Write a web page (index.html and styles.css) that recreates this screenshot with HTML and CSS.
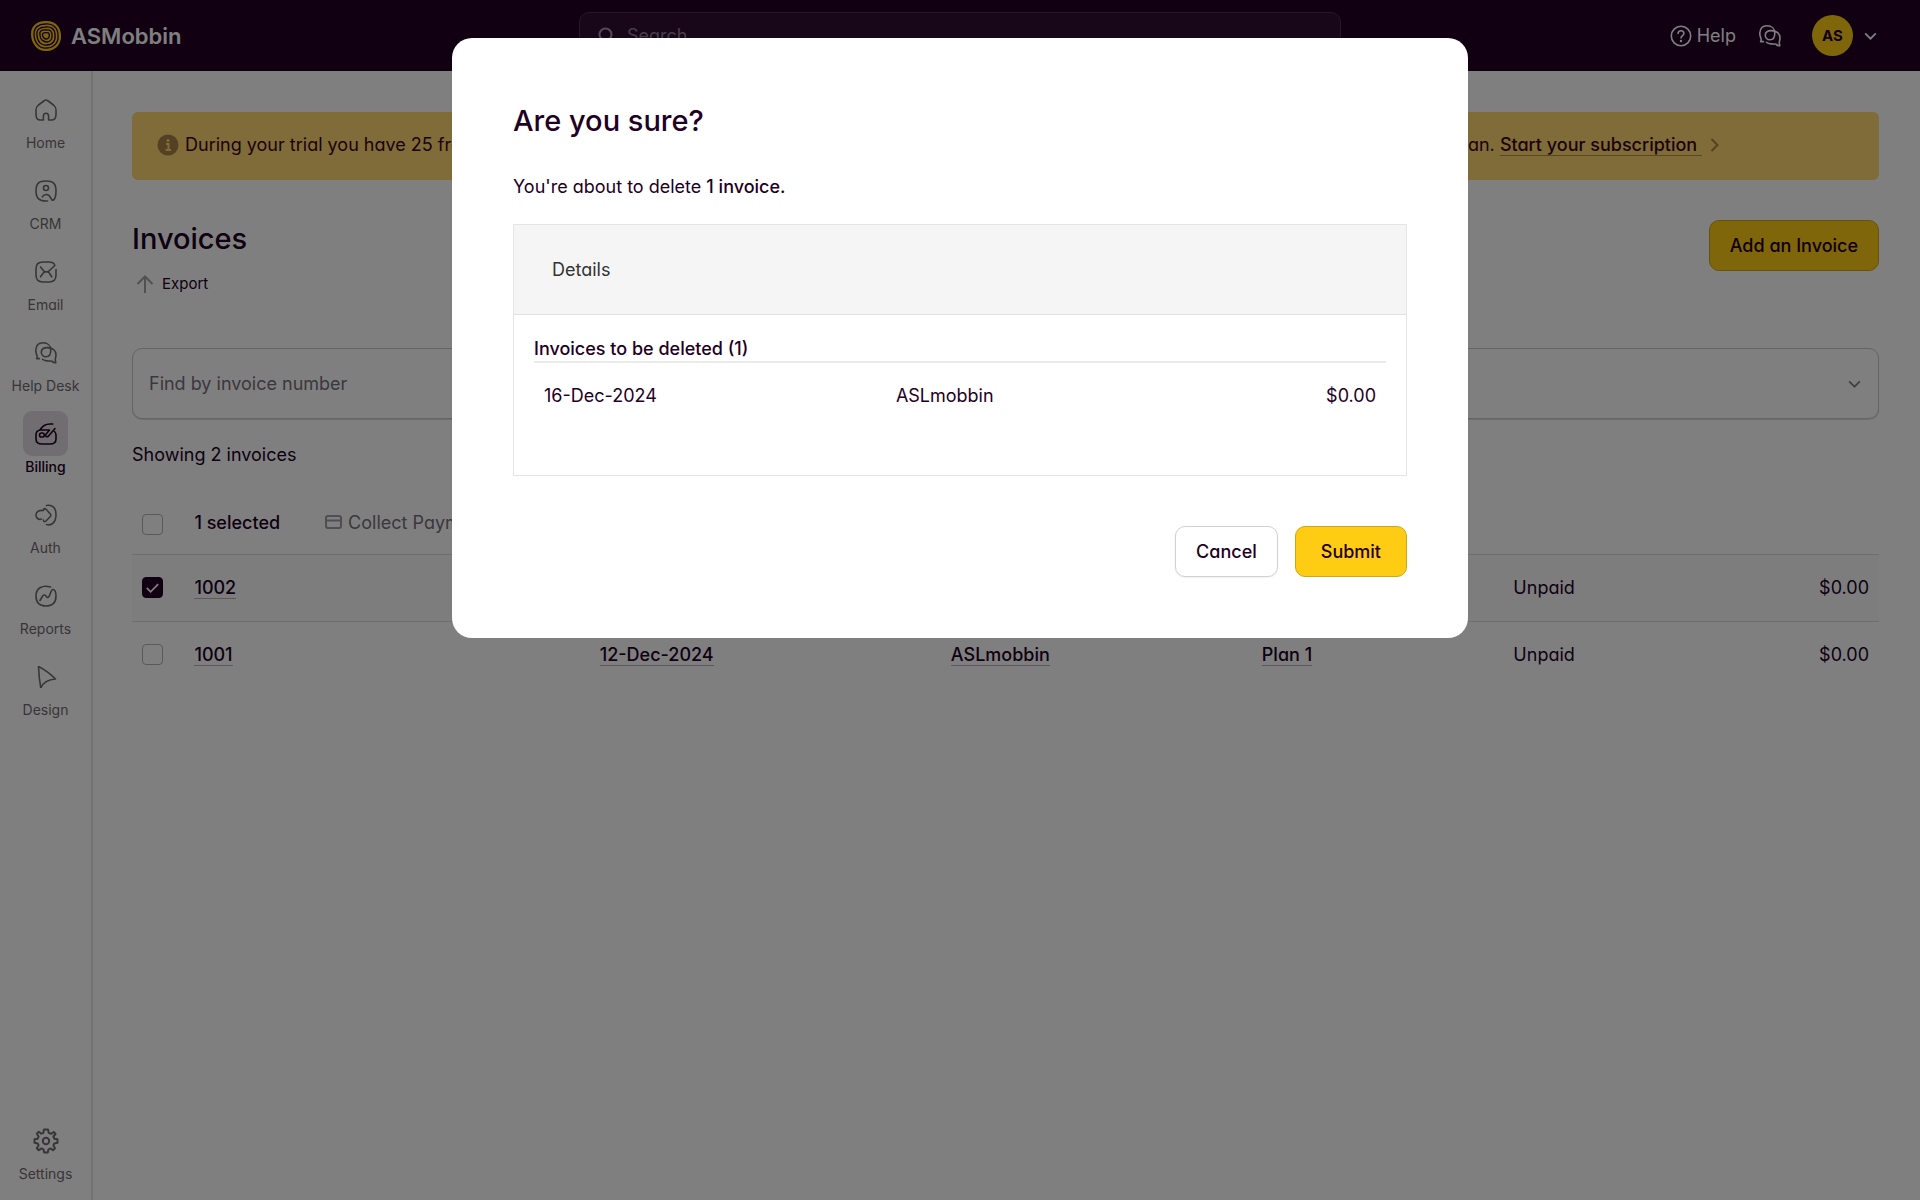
FILE: index.html
```html
<!DOCTYPE html>
<html lang="en">
<head>
<meta charset="utf-8">
<meta name="viewport" content="width=device-width, initial-scale=1">
<title>Invoices – ASMobbin</title>
<link rel="stylesheet" href="styles.css">
</head>
<body>
<svg class="sprite" aria-hidden="true">
  <symbol id="chat" viewBox="0 0 22 22"><path d="M4.5 16.6H1.6C2.6 15.4 2.3 14.4 1.8 13C.9 10.600.7 9.500.8 8C1.100 3.600 3.700.8 8 .8C12.500.8 15.800 3.600 15.800 8C15.800 12.200 13.800 14.800 11 14.800C8.200 14.800 6.300 12.800 6.300 10.300C6.300 7.400 8.500 5.600 12.200 5.600C17.600 5.600 21 8.500 21 13C21 15 20.300 16 20.300 17.500C20.300 18.800 20.500 19.700 20.800 20.700C19.500 21 18 20.500 17.200 19.300C15.500 18.800 13.800 19.200 12 18.900C10 18.700 8.800 18.300 7.600 17.400"/></symbol>
  <symbol id="chevron" viewBox="0 0 14 9"><path d="M1 1.500L7 7.500L13 1.500"/></symbol>
</svg>

<div class="app">
  <header class="topbar">
    <a class="brand" href="#">
      <svg class="brand-mark" viewBox="0 0 32 32" aria-hidden="true">
        <path class="mark-fill" d="M1 14C1 5 8 1 15 1C24 0 31 6 31 15C32 24 25 31 17 31C8 32 1 24 1 14z"/>
        <path class="mark-ring" d="M4 14C4 7 9 4 15 4C23 3 28 8 28 15C29 22 24 28 17 28C9 29 4 22 4 14z"/>
        <path class="mark-ring" d="M7 15C6 9 11 7 15 7C21 6 25 9 25 15C26 21 22 25 17 25C11 26 7 21 7 15z"/>
        <path class="mark-ring" d="M10 15C9 11 12 9.500 16 10C20 9.500 22.500 11 22 16C22.500 19 20 22 17 22C13 22 10 19 10 15z"/>
        <path class="mark-ring" d="M12.500 14.500C12.500 12.500 15 12.700 17 12.700C19 12.700 19.500 14 19.300 16C19 18 18 19 16.500 19C14.500 19 12.500 17 12.500 14.500z"/>
      </svg>
      <span>ASMobbin</span>
    </a>
    <label class="search">
      <svg class="search-icon" viewBox="0 0 16 18" aria-hidden="true"><circle cx="7.500" cy="7.500" r="6"/><path d="M12 12L15 17"/></svg>
      <input type="search" placeholder="Search" aria-label="Search">
    </label>
    <nav class="tools" aria-label="Account">
      <a class="help" href="#">
        <svg class="icon" viewBox="0 0 22 22" aria-hidden="true"><circle cx="11" cy="11" r="9.700"/><path d="M8.100 8.500C8.100 6.800 9.300 5.700 11 5.700S13.900 6.800 13.900 8.400C13.900 10.400 11 10.800 11 13"/><circle class="dot" cx="11" cy="16" r="1.200"/></svg>
        <span>Help</span>
      </a>
      <button class="plain" type="button" aria-label="Messages"><svg class="icon" aria-hidden="true"><use href="#chat"/></svg></button>
      <button class="plain account" type="button">
        <span class="avatar">AS</span>
        <svg class="chevron" aria-hidden="true"><use href="#chevron"/></svg>
      </button>
    </nav>
  </header>

  <div class="body">
    <nav class="sidebar" aria-label="Main">
      <a class="side-item" href="#"><span class="side-icon"><svg class="icon" viewBox="0 0 22 22" aria-hidden="true"><path d="M8.400 21V17.200C8.400 13.200 13.600 13.200 13.600 17.200V21H16.500C19.600 21 21 19 21 15.500V11C21 8.700 20.300 7.500 18.500 6L12.500 1.500Q11 .5 9.500 1.500L3.500 6C1.700 7.500 1 8.700 1 11V15.500C1 19 2.400 21 5.500 21Z"/></svg></span><span>Home</span></a>
      <a class="side-item" href="#"><span class="side-icon"><svg class="icon" viewBox="0 0 22 22" aria-hidden="true"><path d="M12.500 21C4 21.500 1 18 1 11C1 3.500 4 1 11 1S21 3.500 21 11C21 15.500 20.500 19 18 20.300C15.500 20.500 16 14.500 11.500 14.500C9 14.500 8 15.500 7.300 16.800"/><circle cx="11" cy="8" r="2.500"/></svg></span><span>CRM</span></a>
      <a class="side-item" href="#"><span class="side-icon"><svg class="icon" viewBox="0 0 22 22" aria-hidden="true"><path d="M5.500 6L8.500 9.800Q9.300 10.800 10.500 10.800H12Q13.500 10.800 14.500 9.500L19.800 4.500C19.200 1.500 17 1 13.500 1H8C3 1 1 3 1 8V14C1 19 3 21 8 21H14C19 21 21 19 21 14V8.500"/><path d="M5.500 15.800L8.500 11.800Q9.300 10.800 10.500 10.800H12Q13.500 10.800 14.200 12L16.800 15.800"/></svg></span><span>Email</span></a>
      <a class="side-item" href="#"><span class="side-icon"><svg class="icon" aria-hidden="true"><use href="#chat"/></svg></span><span>Help Desk</span></a>
      <a class="side-item active" href="#" aria-current="page"><span class="side-icon"><svg class="icon" viewBox="0 0 22 22" aria-hidden="true"><path d="M17.800 1H15C10 1 7 3.500 5 7H14.500L10.800 11.500C10 14 12.500 14.500 14 12.500L20 5.500M5 7C2 7.500 1 9.500 1 12V16C1 19.500 3 21 7 21H15C19 21 21 19.500 21 16V12C21 10 20.500 9.500 19.500 8.500"/><rect x="4.600" y="10" width="4.600" height="4" rx="1.800"/></svg></span><span>Billing</span></a>
      <a class="side-item" href="#"><span class="side-icon"><svg class="icon" viewBox="0 0 22 22" aria-hidden="true"><path d="M11.500 1.500C17.500 .3 21 4 21 10.500C21 18 17 22 11.500 20.500"/><path d="M8.500 16C8.500 18.500 10.500 17.800 11.500 16.500L15.300 12.500Q16.300 11.200 15.300 10L11.500 5.800C10 4.300 8.500 4 8.500 6.500C4 6 1 7.500 1 11.300C1 14.500 4 16 6.500 15"/></svg></span><span>Auth</span></a>
      <a class="side-item" href="#"><span class="side-icon"><svg class="icon" viewBox="0 0 22 22" aria-hidden="true"><path d="M15.500 2C7 -.5 1 3.500 1 11C1 17.500 4.500 21 11 21S21 17.500 21 11C21 7.500 20 5 18.200 4.500C16 4 15.500 9 14 11.500C12.500 13.500 11.500 12 10.500 10.500C9.500 9.500 8 10 7.300 11.500L5 15.500"/></svg></span><span>Reports</span></a>
      <a class="side-item" href="#"><span class="side-icon"><svg class="icon" viewBox="0 0 22 22" aria-hidden="true"><path d="M3.500 .5C3.800 8 4.500 15 5.800 22C8.500 15.500 13.500 13.500 20.500 13C15.500 8 9.500 3.500 3.500 .5z"/></svg></span><span>Design</span></a>
      <a class="side-item settings" href="#"><span class="side-icon"><svg class="icon gear" viewBox="0 0 26 26" aria-hidden="true"><circle cx="13" cy="13" r="3.200"/><path d="M11 1.500H15L15.700 4.800L18 5.800L20.800 4L22.500 6L20.400 8.500L21.300 10.700L24.500 11.300V14.700L21.300 15.400L20.400 17.500L22 20.300L20 22.200L17.500 20.400L15.500 21.300L14.800 24.500H11.200L10.500 21.300L8.500 20.400L5.800 22.200L3.800 20.200L5.600 17.500L4.700 15.400L1.500 14.700V11.300L4.700 10.700L5.600 8.500L3.800 5.800L5.800 3.800L8.300 5.700L10.400 4.800z"/></svg></span><span>Settings</span></a>
    </nav>

    <main class="content">
      <div class="banner">
        <svg class="info" viewBox="0 0 22 22" aria-hidden="true"><circle class="info-disc" cx="11" cy="11" r="10.500"/><circle class="info-mark" cx="11" cy="6.500" r="1.500"/><path class="info-stem" d="M9 10H11.500V16M8.500 16H14"/></svg>
        <p class="banner-text"><span>During your trial you have 25 free invoices.</span>
        <span>Upgrade to a paid plan. <a class="banner-link" href="#">Start your subscription&nbsp;</a></span></p>
        <svg class="arrow-right" viewBox="0 0 9 14" aria-hidden="true"><path d="M1.500 1L7.500 7L1.500 13"/></svg>
      </div>

      <div class="page-head">
        <div>
          <h1>Invoices</h1>
          <a class="export" href="#"><svg class="arrow-up" viewBox="0 0 18 18" aria-hidden="true"><path d="M9 18V2M1.500 9L9 1.500L16.500 9"/></svg>Export</a>
        </div>
        <button class="btn primary" type="button">Add an Invoice</button>
      </div>

      <div class="filter">
        <select aria-label="Find by invoice number"><option>Find by invoice number</option></select>
        <svg class="chevron filter-chevron" aria-hidden="true"><use href="#chevron"/></svg>
      </div>

      <p class="count">Showing 2 invoices</p>

      <table class="invoices">
        <colgroup><col class="c-check"><col class="c-number"><col class="c-date"><col class="c-client"><col class="c-plan"><col></colgroup>
        <thead>
          <tr>
            <th class="select-all"><input type="checkbox" aria-label="Select all invoices"></th>
            <th colspan="5"><div class="bulk"><span class="selected">1 selected</span>
              <button class="plain collect" type="button"><svg class="card" viewBox="0 0 17 15" aria-hidden="true"><rect x="1" y="1" width="15" height="12" rx="2"/><path d="M1 5.500H16"/></svg>Collect Payment</button></div></th>
          </tr>
        </thead>
        <tbody>
          <tr class="checked">
            <td><input type="checkbox" checked aria-label="Select invoice 1002"></td>
            <td><a href="#">1002</a></td><td><a href="#">16-Dec-2024</a></td><td><a href="#">ASLmobbin</a></td><td></td>
            <td><div class="status"><span>Unpaid</span><span>$0.00</span></div></td>
          </tr>
          <tr>
            <td><input type="checkbox" aria-label="Select invoice 1001"></td>
            <td><a href="#">1001</a></td><td><a href="#">12-Dec-2024</a></td><td><a href="#">ASLmobbin</a></td><td><a href="#">Plan 1</a></td>
            <td><div class="status"><span>Unpaid</span><span>$0.00</span></div></td>
          </tr>
        </tbody>
      </table>
    </main>
  </div>
</div>

<div class="overlay">
  <section class="modal" role="dialog" aria-modal="true" aria-labelledby="modal-title">
    <h2 id="modal-title">Are you sure?</h2>
    <p class="lead">You're about to delete <strong>1 invoice.</strong></p>
    <div class="details">
      <h3>Details</h3>
      <div class="details-body">
        <table class="deleted">
          <caption>Invoices to be deleted (1)</caption>
          <colgroup><col class="c-deleted-date"><col><col></colgroup>
          <tbody><tr><td>16-Dec-2024</td><td>ASLmobbin</td><td class="amount">$0.00</td></tr></tbody>
        </table>
      </div>
    </div>
    <div class="actions">
      <button class="btn secondary" type="button">Cancel</button>
      <button class="btn primary submit" type="submit">Submit</button>
    </div>
  </section>
</div>
</body>
</html>
```
FILE: styles.css
```css
* { box-sizing: border-box; }

body {
  margin: 0;
  font: 400 18px/24px Inter, "Liberation Sans", sans-serif;
  font-feature-settings: "cv11";
  color: #220024;
  background: #fff;
}

h1, h2, h3, p { margin: 0; }
a { color: inherit; text-decoration: none; }
button, input, select { font: inherit; font-feature-settings: inherit; color: inherit; }
svg { display: block; fill: none; stroke: currentColor; flex: none; }
.sprite { position: absolute; width: 0; height: 0; }

.app { min-height: 100vh; display: flex; flex-direction: column; }
.plain { border: 0; padding: 0; background: none; display: flex; align-items: center; }
.icon { width: 22px; height: 22px; stroke-width: 1.6; stroke-linecap: round; stroke-linejoin: round; }
.chevron { width: 13px; height: 8px; stroke-width: 2; }

/* Top bar */
.topbar {
  height: 71px;
  padding: 0 30px;
  display: grid;
  grid-template-columns: 1fr minmax(0, 762px) 1fr;
  align-items: center;
  background: #220024;
  color: #fff;
}
.brand { display: flex; align-items: center; gap: 9px; font-size: 22px; font-weight: 600; }
.brand-mark { width: 32px; height: 32px; }
.mark-fill { fill: #ffcc14; stroke: none; }
.mark-ring { stroke: #220024; stroke-width: 1.3; }
.search {
  height: 48px;
  display: flex;
  align-items: center;
  gap: 13px;
  padding: 0 18px;
  border: 1px solid #4c304e;
  border-radius: 10px;
  background: #300e32;
}
.search-icon { width: 16px; height: 18px; stroke-width: 2; stroke: #a898aa; }
.search input { flex: 1; min-width: 0; border: 0; padding: 0; background: none; outline: 0; }
.search input::placeholder { color: #8e7a90; opacity: 1; }
.tools { display: flex; align-items: center; justify-content: flex-end; padding-right: 13px; }
.help { display: flex; align-items: center; gap: 5px; margin-right: 23px; }
.dot { fill: currentColor; stroke: none; }
.account { gap: 11px; margin-left: 31px; }
.avatar {
  width: 41px;
  height: 41px;
  border-radius: 50%;
  display: grid;
  place-items: center;
  background: #ffcc14;
  color: #220024;
  font-size: 15px;
  font-weight: 700;
}

/* Sidebar */
.body { flex: 1; display: flex; }
.sidebar {
  width: 93px;
  flex: none;
  padding: 16px 0;
  display: flex;
  flex-direction: column;
  gap: 15px;
  border-right: 2px solid #e6e4e6;
}
.side-item {
  display: flex;
  flex-direction: column;
  align-items: center;
  gap: 1px;
  font-size: 14px;
  line-height: 20px;
  color: #716b72;
}
.side-icon { width: 45px; height: 45px; display: grid; place-items: center; border-radius: 9px; }
.active { color: #220024; font-weight: 500; }
.active .side-icon { background: #e2dce3; }
.settings { margin-top: auto; }
.gear { width: 26px; height: 26px; stroke-width: 2; }

/* Page */
.content { flex: 1; min-width: 0; padding: 41px 41px 41px 39px; }
.banner {
  min-height: 68px;
  padding: 0 160px 2px 25px;
  display: flex;
  align-items: center;
  border-radius: 6px;
  background: #ffd870;
  color: #3a0520;
}
.info { width: 22px; height: 22px; margin-right: 6px; }
.info-disc { fill: #a88046; stroke: none; }
.info-mark { fill: #ffd870; stroke: none; }
.info-stem { stroke: #ffd870; stroke-width: 2; }
.banner-text { flex: 1; display: flex; justify-content: space-between; }
.banner-link { font-weight: 500; border-bottom: 1px solid #b98f4a; }
.arrow-right { width: 9px; height: 14px; margin-left: 8px; stroke: #a88046; stroke-width: 2; }

.page-head { display: flex; justify-content: space-between; align-items: flex-start; margin-top: 40px; }
h1, h2 { font-size: 29px; line-height: 38px; font-weight: 500; }
.export { display: flex; align-items: center; gap: 8px; padding-left: 4px; margin-top: 14px; font-size: 15px; color: #220024; }
.arrow-up { width: 18px; height: 18px; stroke: #a5a0a6; stroke-width: 2; }

.btn { height: 51px; padding: 0 20px; border-radius: 10px; font-weight: 500; border: 1px solid; }
.primary { background: #ffcc14; border-color: #d0a616; }
.secondary { background: #fff; border-color: #d3d0d4; box-shadow: 0 1px 2px #0000000f; }

.filter { display: grid; margin-top: 52px; }
.filter select {
  grid-area: 1 / 1;
  height: 71px;
  padding: 0 48px 0 16px;
  border: 1px solid #cbc8cc;
  border-radius: 10px;
  background: #fff;
  color: #77707a;
  appearance: none;
  box-shadow: 0 1px 1px #00000026;
}
.filter-chevron { grid-area: 1 / 1; justify-self: end; align-self: center; margin-right: 18px; color: #858086; pointer-events: none; }
.count { margin-top: 24px; }

table { width: 100%; border-collapse: collapse; table-layout: fixed; }
.invoices { margin-top: 25px; }
.invoices th, .invoices td { height: 67px; padding: 0 10px; text-align: left; font-weight: 400; }
.invoices th { height: 62px; }
.invoices .select-all { padding-top: 4px; }
.invoices tbody tr { border-top: 1px solid #dfdbdf; }
.checked { background: #fcfafc; }
.c-check { width: 3%; }
.c-number { width: 23.2%; }
.c-date { width: 20.1%; }
.c-client { width: 17.8%; }
.c-plan { width: 14.4%; }
.invoices td a { font-weight: 500; border-bottom: 1px solid #bdb3be; }
input[type="checkbox"] {
  display: block;
  appearance: none;
  width: 21px;
  height: 21px;
  margin: 0;
  border: 1px solid #b5b0b6;
  border-radius: 4px;
  background: #fff;
}
input[type="checkbox"]:checked {
  border-color: #220024;
  background: #220024 url("data:image/svg+xml,%3Csvg xmlns='http://www.w3.org/2000/svg' viewBox='0 0 20 20'%3E%3Cpath d='M4 10.500l4 4 8-8' fill='none' stroke='white' stroke-width='1.800'/%3E%3C/svg%3E") center / 19px no-repeat;
}
.bulk { display: flex; align-items: center; gap: 45px; }
.selected { font-weight: 500; }
.collect { gap: 6px; color: #77707a; }
.card { width: 17px; height: 15px; stroke-width: 2; stroke: #a29ca4; }
.status { display: flex; justify-content: space-between; }

/* Confirmation dialog */
.overlay {
  position: fixed;
  inset: 0;
  display: flex;
  justify-content: center;
  align-items: flex-start;
  padding: 38px 24px;
  background: rgb(0 0 0 / 50%);
}
.modal {
  width: 100%;
  max-width: 1016px;
  padding: 64px 61px 61px;
  border-radius: 20px;
  background: #fff;
}
.lead { margin-top: 35px; }
.lead strong { font-weight: 500; }
.details { margin-top: 25px; border: 1px solid #e5e5e5; }
.details h3 {
  padding: 33px 38px 32px;
  font-size: 18px;
  line-height: 24px;
  font-weight: 400;
  color: #333;
  background: #f5f5f5;
  border-bottom: 1px solid #e0e0e0;
}
.details-body { padding: 22px 20px 67px; }
.deleted caption { text-align: left; font-weight: 500; border-bottom: 2px solid #ebebeb; }
.deleted td { padding: 21px 10px 0; }
.c-deleted-date { width: 41.3%; }
.deleted .amount { text-align: right; }
.actions { display: flex; justify-content: flex-end; gap: 17px; margin-top: 50px; }
.submit { padding: 0 25px; }
```
